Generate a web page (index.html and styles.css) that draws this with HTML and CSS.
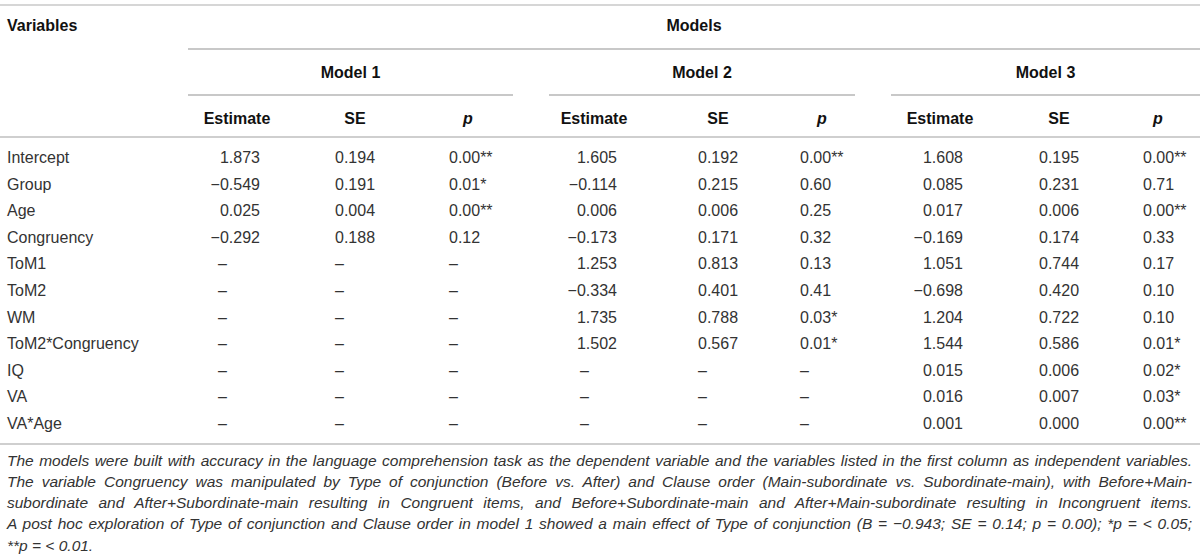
FILE: index.html
```html
<!DOCTYPE html>
<html lang="en">
  <head>
    <meta charset="UTF-8" />
    <meta name="viewport" content="width=device-width, initial-scale=1.0" />
    <title>Models table</title>
    <link rel="stylesheet" href="styles.css">
  </head>
  <body>
    <div class="wrap">
      <table class="stats">
        <colgroup>
          <col style="width: 178px" />
          <col style="width: 118px" />
          <col style="width: 118px" />
          <col style="width: 118px" />
          <col style="width: 124px" />
          <col style="width: 124px" />
          <col style="width: 102px" />
          <col style="width: 116px" />
          <col style="width: 122px" />
          <col style="width: 80px" />
        </colgroup>
        <thead>
          <tr>
            <th class="var" rowspan="3">Variables</th>
            <th colspan="9" class="grp"><div class="rule models">Models</div></th>
          </tr>
          <tr>
            <th colspan="3" class="grp"><div class="rule m1">Model 1</div></th>
            <th colspan="3" class="grp"><div class="rule m2">Model 2</div></th>
            <th colspan="3" class="grp"><div class="rule m3">Model 3</div></th>
          </tr>
          <tr class="sub">
            <th>Estimate</th><th>SE</th><th class="ph p1"><i>p</i></th>
            <th>Estimate</th><th>SE</th><th class="ph p2"><i>p</i></th>
            <th>Estimate</th><th>SE</th><th class="ph p3"><i>p</i></th>
          </tr>
        </thead>
        <tbody>
          <tr>
            <td>Intercept</td>
            <td>1.873</td><td>0.194</td><td>0.00**</td>
            <td>1.605</td><td>0.192</td><td>0.00**</td>
            <td>1.608</td><td>0.195</td><td>0.00**</td>
          </tr>
          <tr>
            <td>Group</td>
            <td>−0.549</td><td>0.191</td><td>0.01*</td>
            <td>−0.114</td><td>0.215</td><td>0.60</td>
            <td>0.085</td><td>0.231</td><td>0.71</td>
          </tr>
          <tr>
            <td>Age</td>
            <td>0.025</td><td>0.004</td><td>0.00**</td>
            <td>0.006</td><td>0.006</td><td>0.25</td>
            <td>0.017</td><td>0.006</td><td>0.00**</td>
          </tr>
          <tr>
            <td>Congruency</td>
            <td>−0.292</td><td>0.188</td><td>0.12</td>
            <td>−0.173</td><td>0.171</td><td>0.32</td>
            <td>−0.169</td><td>0.174</td><td>0.33</td>
          </tr>
          <tr>
            <td>ToM1</td>
            <td class="nd">–</td><td>–</td><td>–</td>
            <td>1.253</td><td>0.813</td><td>0.13</td>
            <td>1.051</td><td>0.744</td><td>0.17</td>
          </tr>
          <tr>
            <td>ToM2</td>
            <td class="nd">–</td><td>–</td><td>–</td>
            <td>−0.334</td><td>0.401</td><td>0.41</td>
            <td>−0.698</td><td>0.420</td><td>0.10</td>
          </tr>
          <tr>
            <td>WM</td>
            <td class="nd">–</td><td>–</td><td>–</td>
            <td>1.735</td><td>0.788</td><td>0.03*</td>
            <td>1.204</td><td>0.722</td><td>0.10</td>
          </tr>
          <tr>
            <td>ToM2*Congruency</td>
            <td class="nd">–</td><td>–</td><td>–</td>
            <td>1.502</td><td>0.567</td><td>0.01*</td>
            <td>1.544</td><td>0.586</td><td>0.01*</td>
          </tr>
          <tr>
            <td>IQ</td>
            <td class="nd">–</td><td>–</td><td>–</td>
            <td class="nd">–</td><td>–</td><td>–</td>
            <td>0.015</td><td>0.006</td><td>0.02*</td>
          </tr>
          <tr>
            <td>VA</td>
            <td class="nd">–</td><td>–</td><td>–</td>
            <td class="nd">–</td><td>–</td><td>–</td>
            <td>0.016</td><td>0.007</td><td>0.03*</td>
          </tr>
          <tr>
            <td>VA*Age</td>
            <td class="nd">–</td><td>–</td><td>–</td>
            <td class="nd">–</td><td>–</td><td>–</td>
            <td>0.001</td><td>0.000</td><td>0.00**</td>
          </tr>
        </tbody>
      </table>
      <p class="note">
        <span class="ln">The models were built with accuracy in the language comprehension task as the dependent variable and the variables listed in the first column as independent variables.</span>
        <span class="ln">The variable Congruency was manipulated by Type of conjunction (Before vs. After) and Clause order (Main-subordinate vs. Subordinate-main), with Before+Main-</span>
        <span class="ln">subordinate and After+Subordinate-main resulting in Congruent items, and Before+Subordinate-main and After+Main-subordinate resulting in Incongruent items.</span>
        <span class="ln">A post hoc exploration of Type of conjunction and Clause order in model 1 showed a main effect of Type of conjunction (B = −0.943; SE = 0.14; p = 0.00); *p = &lt; 0.05;</span>
        <span class="last">**p = &lt; 0.01.</span>
      </p>
    </div>
  </body>
</html>
```

FILE: styles.css
```css
body {
  margin: 0;
  font-family: "Liberation Sans", Arial, sans-serif;
  color: #333;
  background: #fff;
}
.wrap {
  width: 1200px;
  padding-top: 4px;
}
.stats {
  width: 1200px;
  table-layout: fixed;
  border-collapse: separate;
  border-spacing: 0;
  border-top: 2px solid #d6d6d6;
  font-size: 16px;
}
.stats th {
  padding: 0;
  font-weight: bold;
  color: #111;
  line-height: 18px;
  vertical-align: top;
}
.stats th.var {
  text-align: left;
  padding: 11px 0 0 7px;
  border-bottom: 2px solid #cfcfcf;
}
.rule {
  text-align: center;
  border-bottom: 2px solid #c8c8c8;
}
.models {
  margin-left: 10px;
  height: 31px;
  padding-top: 11px;
}
.m1,
.m2,
.m3 {
  height: 30px;
  padding-top: 14px;
}
.m1 {
  margin: 0 19px 0 10px;
}
.m2 {
  margin: 0 27px 0 17px;
}
.m3 {
  margin-left: 9px;
}
.sub th {
  padding: 14px 0 8px;
  border-bottom: 2px solid #cfcfcf;
}
.sub th.ph {
  text-align: left;
}
.sub th.p1 {
  padding-left: 49px;
}
.sub th.p2 {
  padding-left: 37px;
}
.sub th.p3 {
  padding-left: 33px;
}

.stats td {
  padding: 0;
  line-height: 26.6px;
  vertical-align: top;
  white-space: nowrap;
  text-align: left;
}
.stats tbody tr:first-child td {
  padding-top: 7px;
}
.stats tbody tr:last-child td {
  padding-bottom: 5px;
  border-bottom: 2px solid #cfcfcf;
}
.stats td:nth-child(1) {
  padding-left: 7px;
}
/* estimates: right edge of the numbers */
.stats td:nth-child(2) {
  text-align: right;
  padding-right: 36px;
}
.stats td:nth-child(5) {
  text-align: right;
  padding-right: 39px;
}
.stats td:nth-child(8) {
  text-align: right;
  padding-right: 35px;
}
.stats td:nth-child(2).nd {
  text-align: left;
  padding-left: 40px;
}
.stats td:nth-child(5).nd {
  text-align: left;
  padding-left: 48px;
}
/* SE */
.stats td:nth-child(3) {
  padding-left: 39px;
}
.stats td:nth-child(6) {
  padding-left: 42px;
}
.stats td:nth-child(9) {
  padding-left: 41px;
}
/* p */
.stats td:nth-child(4) {
  padding-left: 35px;
}
.stats td:nth-child(7) {
  padding-left: 20px;
}
.stats td:nth-child(10) {
  padding-left: 23px;
}

.note {
  margin: 5px 8px 0 7px;
  font-style: italic;
  font-size: 15.5px;
  line-height: 21.3px;
  color: #333;
  text-align: justify;
}
.note .ln {
  display: block;
  text-align-last: justify;
}
.note .last {
  display: block;
}
```
